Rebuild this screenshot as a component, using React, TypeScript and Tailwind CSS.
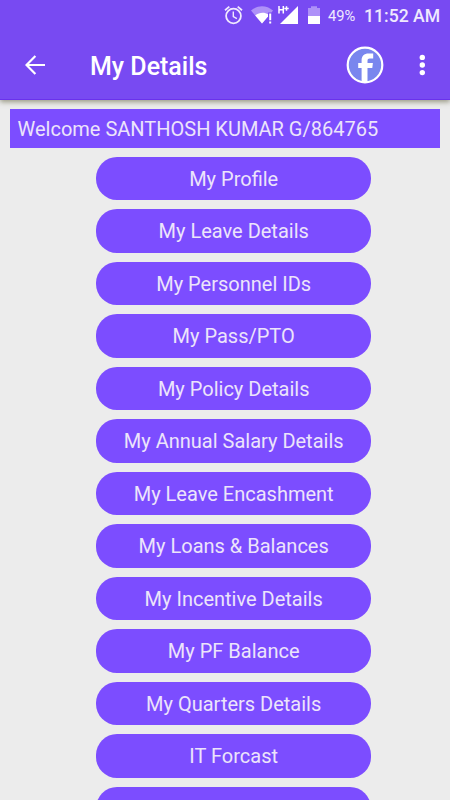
import React from "react";

const menuItems = [
  "My Profile",
  "My Leave Details",
  "My Personnel IDs",
  "My Pass/PTO",
  "My Policy Details",
  "My Annual Salary Details",
  "My Leave Encashment",
  "My Loans & Balances",
  "My Incentive Details",
  "My PF Balance",
  "My Quarters Details",
  "IT Forcast",
  "",
];

const StatusBar: React.FC = () => (
  <div className="flex h-8 items-center text-[#efe9fe]">
    {/* Alarm, wifi, signal and battery */}
    <svg width="110" height="32" viewBox="0 0 110 32" className="ml-[215px] shrink-0" fill="none">
      <circle cx="18.500" cy="16" r="7.400" stroke="currentColor" strokeWidth="1.8" />
      <path d="M18.300 11.500v5l3.600 2.200" stroke="currentColor" strokeWidth="1.4" />
      <path d="M10 10.200l4.300-3.600M27 10.200l-4.300-3.600" stroke="currentColor" strokeWidth="1.8" />
      <path d="M36 10.600C42.500 4.800 51.500 4.800 58 10.600L56.500 12.500H53v4L47 23.500z" fill="currentColor" opacity="0.45" />
      <path d="M40.200 15.500C44 12 50 12 53 14.300V16.500L47 23.500z" fill="#fff" />
      <path d="M54.200 13.500h2v6.800h-2zM54.200 21.600h2v2h-2z" fill="#fff" />
      <path d="M83 6v18H65z" fill="#fff" />
      <path d="M64 6v7.500M68.300 6v7.500M64 9.800h4.300M69.300 8.500h4.400M71.500 6.300v4.400" stroke="#fff" strokeWidth="1.5" />
      <path d="M93 8h3V6.300h6V8h3v8H93z" fill="currentColor" opacity="0.45" />
      <path d="M93 16h12v8H93z" fill="#fff" />
    </svg>
    <span className="ml-[3px] w-9 whitespace-nowrap text-[14.700px] leading-8">49%</span>
    <span className="whitespace-nowrap text-[17.600px] leading-8 font-medium">11:52 AM</span>
  </div>
);

const AppBar: React.FC = () => (
  <header className="relative h-[100px] border-b border-[#6a32ec] bg-[#784af2] shadow-[0_2px_5px_rgba(70,70,30,0.5)]">
    <StatusBar />
    <div className="flex h-[66px] items-center text-white">
      <svg width="20" height="20" viewBox="0 0 20 20" className="ml-[25px]" fill="none" stroke="currentColor" strokeWidth="2.2">
        <path d="M20 10H2M10.400 1L1.500 10l8.900 9" />
      </svg>
      <h1 className="ml-[45px] w-[256px] pt-1 text-[25px] leading-8 font-medium">My Details</h1>
      <svg width="38" height="38" viewBox="0 0 38 38" fill="none">
        <defs>
          <clipPath id="fbClip">
            <circle cx="19" cy="19" r="17.5" />
          </clipPath>
        </defs>
        <circle cx="19" cy="19" r="17.300" fill="#7986ee" stroke="#fff" strokeWidth="2.200" />
        <path
          clipPath="url(#fbClip)"
          fill="#fff"
          d="M15.600 37.500V22H12.200v-5h3.400v-2.400c0-4.700 2.500-7 7-7h4.600v5h-3.400c-1.600 0-2.300.8-2.300 2.300V17h5.400l-.6 5h-4.800v15.500z"
        />
      </svg>
      <svg width="6" height="22" viewBox="0 0 6 22" className="ml-[35px]" fill="currentColor">
        <circle cx="3.300" cy="3.400" r="2.700" />
        <circle cx="3.300" cy="11" r="2.700" />
        <circle cx="3.300" cy="18.600" r="2.700" />
      </svg>
    </div>
  </header>
);

const App: React.FC = () => {
  return (
    <div className="h-[800px] w-[450px] overflow-hidden bg-[#ececec] font-[Roboto,sans-serif]">
      <AppBar />
      <main>
        <div className="mx-[10px] mt-[9px] h-[39px] bg-[#7c4dff] pl-[7.500px] text-[20px] leading-[40px] whitespace-nowrap text-[#ece4fb]">
          Welcome SANTHOSH KUMAR G/864765
        </div>
        <div className="mt-[8.7px] ml-[96.2px] flex w-[275px] flex-col gap-[9px]">
          {menuItems.map((item, i) => (
            <button
              key={i}
              className="h-[43.5px] w-full shrink-0 rounded-[21px] bg-[#7c4dff] pt-px text-[20px] leading-[42.5px] whitespace-nowrap text-[#ece4fb]"
            >
              {item}
            </button>
          ))}
        </div>
      </main>
    </div>
  );
};

export default App;
